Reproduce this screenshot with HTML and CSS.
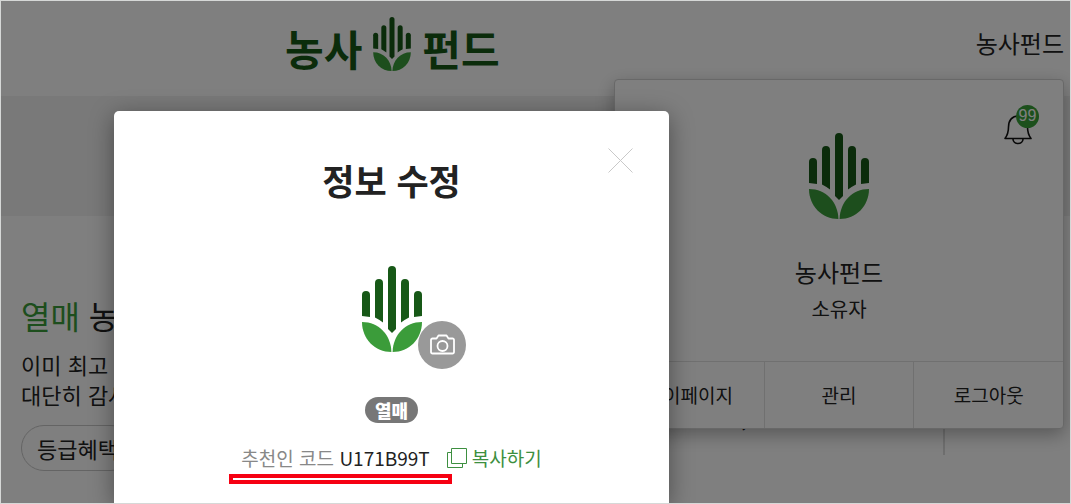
FILE: index.html
```
<!DOCTYPE html>
<html lang="ko">
<head>
  <meta charset="UTF-8">
  <meta name="viewport" content="width=device-width, initial-scale=1.0">
  <title>농사펀드 - 정보 수정</title>
  <link rel="stylesheet" href="styles.css">
</head>
<body>
  <svg class="defs" aria-hidden="true">
    <symbol id="symbol" viewBox="0 0 60 86">
      <g fill="#175817">
        <path d="M0 29a4 4 0 0 1 8 0v22l-8-1z"/>
        <path d="M13 17a4 4 0 0 1 8 0v39.500q-4-3-8-5z"/>
        <path d="M26 4a4 4 0 0 1 8 0v59l-4 4-4-4z"/>
        <path d="M39 17a4 4 0 0 1 8 0v34.500q-4 2-8 5z"/>
        <path d="M52 29a4 4 0 0 1 8 0v21l-8 1z"/>
      </g>
      <g fill="#3b9c3a">
        <path d="M0 56C17 56 29 69 29.400 86 13 86 0 73 0 56z"/>
        <path d="M60 56C43 56 31 69 30.600 86 47 86 60 73 60 56z"/>
      </g>
    </symbol>
  </svg>

  <div class="screen">
    <header class="header">
      <a href="#" class="logo">
        <span>농사</span>
        <svg class="logo-symbol"><use href="#symbol"/></svg>
        <span>펀드</span>
      </a>
      <a href="#" class="user-name">농사펀드</a>
    </header>
    <div class="band"></div>

    <main class="member">
      <div class="member-info">
        <h1 class="grade"><strong>열매</strong> 농사</h1>
        <p class="message">이미 최고<br>대단히 감사</p>
        <a href="#" class="benefit-btn">등급혜택</a>
      </div>
      <div class="stats">
        <span class="stat">,</span>
        <span class="stat-line"></span>
      </div>
    </main>

    <!-- 사용자 메뉴 -->
    <div class="user-menu">
      <button type="button" class="bell" aria-label="알림 99">
        <svg width="28" height="31" viewBox="0 0 28 31" fill="none" stroke="#111" stroke-width="1.600">
          <path d="M1 24.500C4 20.500 4.500 18 4.500 13 4.500 6 8.500 2 14 2s9.500 4 9.500 11c0 5 .500 7.500 3.500 11.500z" stroke-linejoin="round"/>
          <path d="M9 25c0 6 10 6 10 0"/>
        </svg>
        <span class="bell-count">99</span>
      </button>
      <div class="user-menu-body">
        <svg class="symbol"><use href="#symbol"/></svg>
        <p class="menu-name">농사펀드</p>
        <p class="menu-role">소유자</p>
      </div>
      <nav class="user-menu-nav">
        <a href="#">마이페이지</a>
        <a href="#">관리</a>
        <a href="#">로그아웃</a>
      </nav>
    </div>

    <!-- 정보 수정 팝업 -->
    <div class="overlay">
      <section class="modal" role="dialog" aria-labelledby="modal-title">
        <button type="button" class="close" aria-label="닫기">
          <svg width="25" height="25" viewBox="0 0 25 25" stroke="#c9c9c9" stroke-width="1">
            <path d="M.5.5l24 24M24.500.5l-24 24"/>
          </svg>
        </button>
        <h2 class="modal-title" id="modal-title">정보 수정</h2>
        <div class="avatar">
          <svg class="symbol"><use href="#symbol"/></svg>
          <button type="button" class="camera" aria-label="사진 변경">
            <svg width="26" height="22" viewBox="0 0 26 22" fill="none" stroke="#fff" stroke-width="1.800" stroke-linejoin="round">
              <path d="M3.500 4.500h4l2-3h8l2 3h4a1.500 1.500 0 0 1 1.500 1.500v12a1.500 1.500 0 0 1-1.500 1.500h-20a1.500 1.500 0 0 1-1.500-1.500v-12a1.500 1.500 0 0 1 1.500-1.500z"/>
              <circle cx="13.500" cy="12" r="5"/>
            </svg>
          </button>
        </div>
        <span class="badge">열매</span>
        <div class="code-row">
          <span class="code"><span class="code-label">추천인 코드</span> U171B99T</span>
          <button type="button" class="copy">
            <svg width="20" height="20" viewBox="0 0 20 20" fill="none" stroke="#3d8f40" stroke-width="1">
              <path d="M4.500.5h15v15h-15z"/>
              <path d="M4.500 4.500h-4v15h15v-4"/>
            </svg>
            복사하기
          </button>
        </div>
      </section>
    </div>
  </div>
</body>
</html>
```
FILE: styles.css
```
*, *::after { box-sizing: border-box; }
body {
  margin: 0;
  font-family: "Noto Sans CJK KR", sans-serif;
  color: #222;
}
h1, h2, p { margin: 0; font-weight: 400; }
a { color: inherit; text-decoration: none; }
button {
  padding: 0; border: 0;
  background: none;
  font-family: inherit;
  cursor: pointer;
}
svg { display: block; }
.defs { position: absolute; width: 0; height: 0; }
.symbol { width: 60px; height: 86px; }

.screen {
  position: relative;
  height: 100vh;
  border: 1px solid #d6d8d7;
  background: #fff;
  overflow: hidden;
}
.header {
  display: flex;
  justify-content: space-between;
  align-items: flex-start;
  height: 95px;
  padding: 16px 6px 0 284px;
}
.logo {
  display: flex;
  align-items: flex-end;
  gap: 11px;
  font-size: 42px;
  line-height: 36px;
  font-weight: 700;
  color: #175817;
}
.logo span { padding-bottom: 5px; }
.logo-symbol { width: 38px; height: 54px; }
.user-name {
  padding-top: 10px;
  font-size: 24px;
  line-height: 32px;
}
.band { height: 120px; background: #f2f2f2; }

.member {
  display: flex;
  justify-content: space-between;
  padding: 79px 125px 0 20px;
}
.grade { font-size: 32px; line-height: 40px; }
.grade strong { font-weight: 400; color: #3b9c3a; }
.message {
  margin-top: 14px;
  font-size: 22px;
  line-height: 30px;
}
.benefit-btn {
  display: inline-block;
  margin-top: 16px;
  padding: 0 15px;
  border: 1px solid #c8c8c8;
  border-radius: 24px;
  font-size: 22px;
  line-height: 44px;
}
.stats {
  display: flex;
  align-items: flex-end;
  gap: 195px;
  height: 160px;
}
.stat {
  padding-bottom: 22px;
  font-size: 24px;
  line-height: 32px;
}
.stat-line { width: 2px; height: 50px; background: #ddd; }

.user-menu {
  position: absolute;
  top: 78px; right: 6px;
  width: 450px;
  border: 1px solid #d0d0d0;
  border-radius: 4px;
  background: #fff;
  box-shadow: 0 6px 18px rgba(0,0,0,0.3);
}
.user-menu-body {
  display: flex;
  flex-direction: column;
  align-items: center;
  padding: 53px 0 37px;
}
.menu-name {
  margin-top: 35px;
  font-size: 24px;
  line-height: 36px;
}
.menu-role {
  margin-top: 4px;
  font-size: 20px;
  line-height: 30px;
}
.user-menu-nav {
  display: flex;
  border-top: 1px solid #e0e0e0;
}
.user-menu-nav a {
  flex: 1;
  font-size: 19px;
  line-height: 66px;
  text-align: center;
}
.user-menu-nav a + a { border-left: 1px solid #e0e0e0; }
.bell {
  position: absolute;
  top: 34px; right: 31px;
}
.bell-count {
  position: absolute;
  top: -9px; left: 12px;
  width: 23px; height: 23px;
  border-radius: 50%;
  background: #38a038;
  color: #fff;
  font-family: "Liberation Sans", sans-serif;
  font-size: 16px;
  line-height: 22px;
}

.overlay {
  position: absolute;
  inset: 0;
  display: flex;
  justify-content: center;
  padding: 110px 288px 0 0;
  background: rgba(0,0,0,0.5);
}
.modal {
  position: relative;
  display: flex;
  flex-direction: column;
  align-items: center;
  width: 555px;
  padding-top: 43px;
  border-radius: 5px 5px 0 0;
  background: #fff;
  box-shadow: 0 5px 25px rgba(0,0,0,0.4);
}
.close {
  position: absolute;
  top: 37px; right: 36px;
}
.modal-title {
  font-size: 35px;
  line-height: 52px;
  font-weight: 700;
}
.avatar {
  position: relative;
  margin-top: 60px;
}
.camera {
  position: absolute;
  top: 55px; left: 56px;
  display: flex;
  align-items: center;
  justify-content: center;
  width: 48px; height: 48px;
  border-radius: 50%;
  background: #999;
}
.badge {
  margin-top: 45px;
  padding: 0 10px;
  border-radius: 14px;
  background: #777;
  color: #fff;
  font-size: 18px;
  line-height: 26px;
  font-weight: 900;
}
.code-row {
  display: flex;
  align-items: center;
  gap: 17px;
  margin-top: 21px;
  font-size: 19px;
  line-height: 28px;
}
.code { position: relative; }
.code-label { color: #888; }
/* 추천인 코드 강조 표시 */
.code::after {
  content: "";
  position: absolute;
  top: 30px; left: -12px; right: -22px;
  height: 10px;
  border: 4px solid #f60012;
}
.copy {
  display: flex;
  align-items: center;
  gap: 5px;
  color: #3d8f40;
  font-size: 19px;
  line-height: 28px;
}
```
